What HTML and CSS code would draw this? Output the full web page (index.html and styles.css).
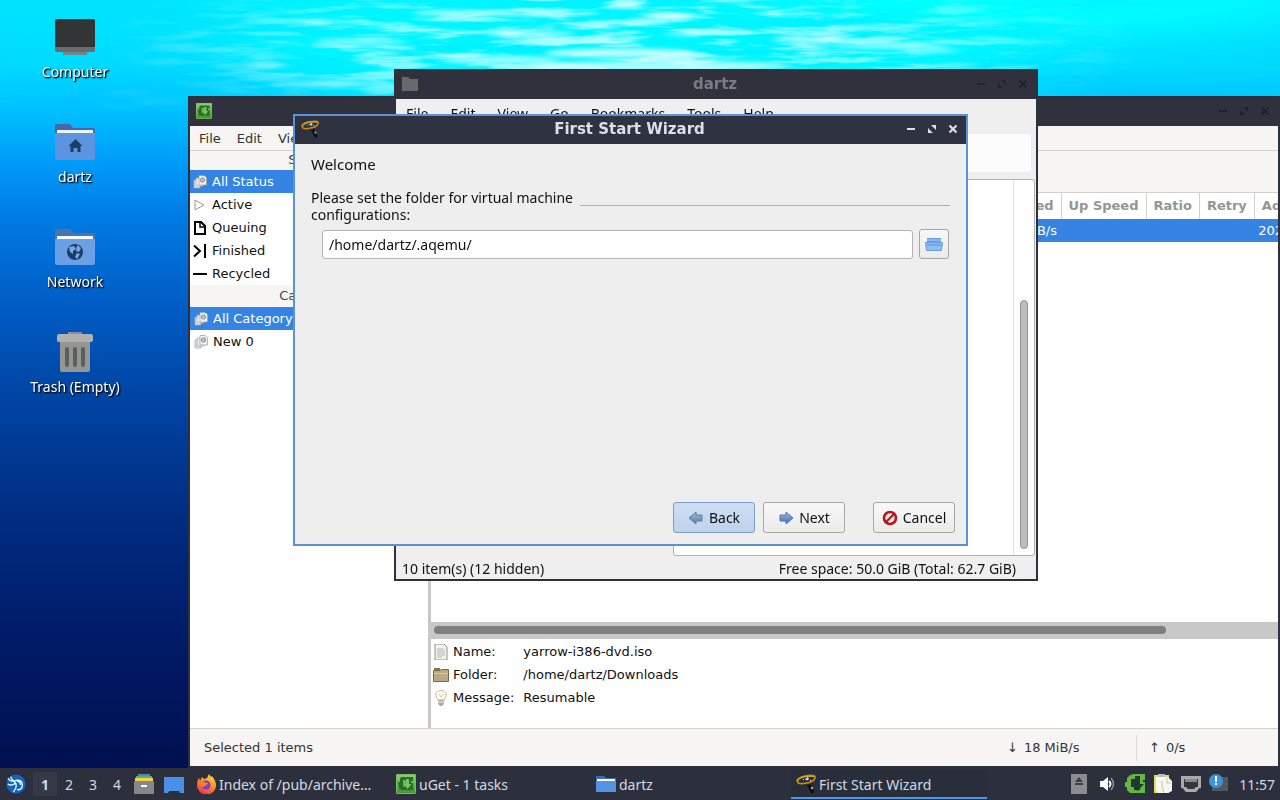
FILE: index.html
```html
<!DOCTYPE html>
<html lang="en">
<head>
<meta charset="utf-8">
<title>Desktop</title>
<link rel="stylesheet" href="styles.css">
</head>
<body>
<svg class="defs" width="0" height="0" aria-hidden="true">
  <defs>
    <linearGradient id="g-green" x1="0" y1="0" x2="0" y2="1"><stop offset="0" stop-color="#8fd07c"/><stop offset="1" stop-color="#3f8f33"/></linearGradient>
    <linearGradient id="g-blue" x1="0" y1="0" x2="0" y2="1"><stop offset="0" stop-color="#9fc0e8"/><stop offset="1" stop-color="#3f66ad"/></linearGradient>
    <linearGradient id="g-steel" x1="0" y1="0" x2="0" y2="1"><stop offset="0" stop-color="#a4c0dc"/><stop offset="1" stop-color="#55789f"/></linearGradient>
    <linearGradient id="g-fire" x1="0.8" y1="0" x2="0.3" y2="1"><stop offset="0" stop-color="#ffe04a"/><stop offset=".45" stop-color="#ff9426"/><stop offset="1" stop-color="#f0304e"/></linearGradient>
    <symbol id="min" viewBox="0 0 10 10"><path d="M1 4h8v2H1z" fill="currentColor"/></symbol>
    <symbol id="max" viewBox="0 0 10 10"><path d="M4 1h5v5zM1 4v5h5z" fill="currentColor"/></symbol>
    <symbol id="close" viewBox="0 0 10 10"><path d="M1.500 1.500l7 7M8.500 1.500l-7 7" stroke="currentColor" stroke-width="2.200"/></symbol>
    <symbol id="uget" viewBox="0 0 20 20"><rect width="20" height="20" rx="1.500" fill="url(#g-green)"/><rect x=".5" y=".5" width="19" height="19" rx="1" fill="none" stroke="#79bd67"/><path d="M2 8h2V5q0-2 2-2h3v3H7v7h2v3H6q-2 0-3-2zM8 5l2-2h7v4h-2v2h2v7h-7l-3-2 3-2 2 1h1v-2z" fill="#276f20"/><path d="M10 5h3v5h2.500L11.500 15 8 10h2z" fill="#79c367"/></symbol>
    <symbol id="wand" viewBox="0 0 20 20"><path d="M11.500 8l5.500 11" stroke="#100f0e" stroke-width="3.500"/><path d="M10 5.500l3 5" stroke="#3c3733" stroke-width="2.500"/><path d="M2.500 9C-1 6 3 3 9 2s11-1 10 2-6 5-11 5.500c-3 .3-5 0-5.500-.5" fill="none" stroke="#c98a12" stroke-width="1.700"/><path d="M2 7c0-3 8-5.500 16-4.500" fill="none" stroke="#f4d24e" stroke-width=".8"/><path d="M9 5l3-2 1 2-2 1.500z" fill="#e4dccf"/><path d="M7 6l1-1M14 6l1 1" stroke="#fff"/><circle cx="16" cy="14" r="1.200" fill="#a9a9a9"/></symbol>
    <symbol id="pages" viewBox="0 0 14 14"><path d="M1 5h6v8H1z" fill="#e4e6e8" stroke="#a2a4a7" stroke-width=".7"/><path d="M3 3h7v8H3z" fill="#ececed" stroke="#a2a4a7" stroke-width=".7"/><path d="M6 .5h5l2.500 2V10H6z" fill="#f3f3f3" stroke="#999b9e" stroke-width=".7"/><circle cx="9.500" cy="5" r="2.200" fill="#b9bcc2" stroke="#85888f" stroke-width=".8"/></symbol>
    <symbol id="folder" viewBox="0 0 20 18"><path d="M0 1h8l2 2h10v14H0z" fill="#3f6aae"/><path d="M1 4h18v3H1z" fill="#fff"/><path d="M0 6h20v11H0z" fill="#5294e2"/></symbol>
  </defs>
</svg>

<main class="desktop">
  <svg class="wallpaper" viewBox="0 0 1280 768" preserveAspectRatio="none" aria-hidden="true">
    <defs>
      <linearGradient id="sea" x1="0" y1="0" x2="0" y2="1">
        <stop offset="0" stop-color="#00e4ff"/><stop offset=".08" stop-color="#00daff"/><stop offset=".14" stop-color="#00c2ff"/><stop offset=".21" stop-color="#009cfa"/><stop offset=".28" stop-color="#007ce4"/><stop offset=".4" stop-color="#005cc4"/><stop offset=".52" stop-color="#0044a2"/><stop offset=".68" stop-color="#002c80"/><stop offset=".84" stop-color="#001a66"/><stop offset="1" stop-color="#001050"/>
      </linearGradient>
      <filter id="soft" x="-20%" y="-100%" width="140%" height="300%"><feGaussianBlur stdDeviation="5 2"/></filter>
      <filter id="glow" x="-30%" y="-60%" width="160%" height="220%"><feGaussianBlur stdDeviation="60 18"/></filter>
      <filter id="ripple" x="0" y="0" width="100%" height="100%"><feTurbulence type="fractalNoise" baseFrequency=".014 .11" numOctaves="4" seed="8"/><feColorMatrix values="0 0 0 0 .75  0 0 0 0 1  0 0 0 0 1  4 0 0 0 -1.800"/></filter>
      <filter id="shade" x="0" y="0" width="100%" height="100%"><feTurbulence type="fractalNoise" baseFrequency=".004 .05" numOctaves="3" seed="3"/><feColorMatrix values="0 0 0 0 0  0 0 0 0 .78  0 0 0 0 1  3 0 0 0 -1.400"/></filter>
      <radialGradient id="fade" gradientUnits="userSpaceOnUse" cx="0" cy="0" r="1" gradientTransform="translate(620 45) scale(520 100)"><stop offset="0" stop-color="#fff"/><stop offset=".5" stop-color="#fff" stop-opacity=".7"/><stop offset="1" stop-color="#fff" stop-opacity="0"/></radialGradient>
      <mask id="fademask"><rect width="1280" height="180" fill="url(#fade)"/></mask>
    </defs>
    <rect width="1280" height="768" fill="url(#sea)"/>
    <ellipse cx="640" cy="30" rx="420" ry="95" fill="#00f6ff" filter="url(#glow)"/>
    <ellipse cx="1060" cy="0" rx="260" ry="36" fill="#00ffff" filter="url(#glow)"/>
    <rect width="1280" height="110" filter="url(#shade)" opacity=".35"/>
    <g mask="url(#fademask)"><rect width="1280" height="180" filter="url(#ripple)" opacity=".8"/></g>
    <g filter="url(#soft)" fill="#d8ffff">
      <ellipse cx="625" cy="5" rx="18" ry="3"/><ellipse cx="667" cy="16" rx="26" ry="3"/><ellipse cx="450" cy="13" rx="36" ry="3" opacity=".7"/><ellipse cx="510" cy="14" rx="46" ry="2" opacity=".7"/>
      <ellipse cx="320" cy="23" rx="15" ry="2" opacity=".7"/><ellipse cx="855" cy="28" rx="30" ry="2" opacity=".7"/><ellipse cx="590" cy="25" rx="28" ry="2" opacity=".6"/><ellipse cx="685" cy="34" rx="20" ry="2" opacity=".6"/>
      <ellipse cx="530" cy="34" rx="44" ry="3" opacity=".7"/><ellipse cx="360" cy="42" rx="46" ry="4" opacity=".5"/><ellipse cx="620" cy="53" rx="75" ry="5" opacity=".8"/><ellipse cx="500" cy="60" rx="60" ry="4" opacity=".7"/><ellipse cx="660" cy="66" rx="130" ry="5" opacity=".8"/>
      <ellipse cx="810" cy="40" rx="38" ry="3" opacity=".7"/><ellipse cx="890" cy="46" rx="60" ry="3" opacity=".6"/><ellipse cx="930" cy="51" rx="30" ry="2" opacity=".6"/>
      <ellipse cx="170" cy="47" rx="18" ry="1" opacity=".4"/><ellipse cx="165" cy="62" rx="24" ry="2" opacity=".25"/><ellipse cx="130" cy="93" rx="24" ry="1" opacity=".2"/><ellipse cx="160" cy="102" rx="26" ry="1" opacity=".2"/><ellipse cx="250" cy="66" rx="40" ry="2" opacity=".4"/><ellipse cx="330" cy="84" rx="60" ry="3" opacity=".5"/>
    </g>
  </svg>

  <nav class="icons" aria-label="Desktop">
    <a class="shortcut" href="#computer"><svg viewBox="0 0 40 40"><path d="M8 35h24v3H8z" fill="#6d8792"/><rect y="2" width="40" height="33" rx="2" fill="#6f6a6c"/><path d="M0 4q0-2 2-2h36q2 0 2 2v26H0z" fill="#333436"/></svg>Computer</a>
    <a class="shortcut" href="#home"><svg viewBox="0 0 40 40"><path d="M0 4q0-2 2-2h13l3 4h20q2 0 2 2v8H0z" fill="#4867ab"/><path d="M2 8h36v6H2z" fill="#eef3fa"/><path d="M0 11h40v25q0 2-2 2H2q-2 0-2-2z" fill="#5d94e2"/><path d="M20.500 17l7 7h-2v6h-3v-4h-4v4h-3v-6h-2z" fill="#1c3d68"/></svg>dartz</a>
    <a class="shortcut" href="#network"><svg viewBox="0 0 40 40"><path d="M0 4q0-2 2-2h13l4 4h19q2 0 2 2v8H0z" fill="#4a74ac"/><path d="M2 9h36v4H2z" fill="#f4f7fb"/><path d="M0 12h40v24q0 2-2 2H2q-2 0-2-2z" fill="#6b9fe6"/><circle cx="20" cy="25" r="8" fill="#1c3d68"/><path d="M14 20l5-1 2 3-3 2v3l-3-2zM22 18l4 3-2 4-3-1zM22 26l3 1-3 5-2-2z" fill="#7aa8e6"/></svg>Network</a>
    <a class="shortcut" href="#trash"><svg viewBox="0 0 40 40"><path d="M13 0h14v4H13z" fill="#8d8f91"/><path d="M5 8h30v30q0 2-2 2H7q-2 0-2-2z" fill="#959594"/><rect x="2" y="2" width="36" height="8" rx="2" fill="#b0b0af"/><path d="M12 17v16M20 17v16M28 17v16" stroke="#5d5e5e" stroke-width="4" stroke-linecap="round"/></svg>Trash (Empty)</a>
  </nav>

  <section class="window uget" aria-label="uGet">
    <header class="titlebar inactive"><svg class="app" viewBox="0 0 20 20"><use href="#uget"/></svg><h2></h2>
      <div class="controls"><button aria-label="Minimize"><svg><use href="#min"/></svg></button><button aria-label="Maximize"><svg><use href="#max"/></svg></button><button aria-label="Close"><svg><use href="#close"/></svg></button></div></header>
    <nav class="menubar"><a href="#f">File</a><a href="#e">Edit</a><a href="#v">View</a></nav>
    <div class="panes">
      <aside class="side">
        <h3>Status</h3>
        <ul>
          <li class="selected"><svg viewBox="0 0 14 14"><use href="#pages"/></svg>All Status</li>
          <li><svg viewBox="0 0 14 14"><path d="M2 2l9 5-9 5z" fill="#fafafa" stroke="#999"/></svg>Active</li>
          <li><svg viewBox="0 0 14 14"><path d="M2 1h6l4 4v8H2z" fill="none" stroke="#000" stroke-width="2"/><path d="M7 1v5h5" fill="none" stroke="#000" stroke-width="1.500"/></svg>Queuing</li>
          <li><svg viewBox="0 0 14 14"><path d="M1 1.500L7 7l-6 5.500M12 0v14" fill="none" stroke="#000" stroke-width="2"/></svg>Finished</li>
          <li><svg viewBox="0 0 14 14"><path d="M0 6h14v2H0z"/></svg>Recycled</li>
        </ul>
        <h3>Category</h3>
        <ul class="categories">
          <li class="selected"><svg viewBox="0 0 14 14"><use href="#pages"/></svg>All Category</li>
          <li><svg viewBox="0 0 14 14"><use href="#pages"/></svg>New 0</li>
        </ul>
      </aside>
      <div class="main">
        <div class="toolbar"></div>
        <div class="downloads">
          <table>
            <thead><tr><th class="wide">Speed</th><th>Up Speed</th><th>Ratio</th><th>Retry</th><th>Added On</th></tr></thead>
            <tbody><tr><td class="wide">18 MiB/s</td><td></td><td></td><td></td><td class="date">2021</td></tr></tbody>
          </table>
        </div>
        <div class="hscroll"><div class="thumb"></div></div>
        <dl class="details">
          <dt><svg viewBox="0 0 16 16"><path d="M2 0h9l3 3v13H2z" fill="#f3f3f2" stroke="#8f8f8d"/><path d="M4 5h7M4 7h8M4 9h8M4 11h8M4 13h5" stroke="#b5b5b5"/></svg>Name:</dt><dd>yarrow-i386-dvd.iso</dd>
          <dt><svg viewBox="0 0 16 16"><path d="M1 1h6v3H1z" fill="#8a7350"/><path d="M.5 3.500h6l2-1h7v12H.5z" fill="#bba983" stroke="#79684a"/><path d="M1 6h14v1H1z" fill="#d7c9a9"/></svg>Folder:</dt><dd>/home/dartz/Downloads</dd>
          <dt><svg viewBox="0 0 16 16"><path d="M5 10c-6-8 1-9.500 3-9.500s9 1.500 3 9.500z" fill="#fbfaea" stroke="#bcbcb2"/><path d="M6 4l2 3 2-3" fill="none" stroke="#d8cf8c"/><path d="M5 10h6v4l-2 2H7l-2-2z" fill="#a9aba8"/><path d="M5 12h6" stroke="#eee"/></svg>Message:</dt><dd>Resumable</dd>
        </dl>
      </div>
    </div>
    <footer class="ustatus"><span class="sel">Selected 1 items</span><span class="rate"><i>↓</i>18 MiB/s</span><span class="rate up"><i>↑</i>0/s</span></footer>
  </section>

  <section class="window files" aria-label="dartz">
    <header class="titlebar inactive"><svg class="app" viewBox="0 0 16 16"><path d="M0 1h6l2 2h8v12H0z" fill="#68696c"/></svg><h2>dartz</h2>
      <div class="controls"><button aria-label="Minimize"><svg><use href="#min"/></svg></button><button aria-label="Maximize"><svg><use href="#max"/></svg></button><button aria-label="Close"><svg><use href="#close"/></svg></button></div></header>
    <nav class="menubar"><a href="#f">File</a><a href="#e">Edit</a><a href="#v">View</a><a href="#g">Go</a><a href="#b">Bookmarks</a><a href="#t">Tools</a><a href="#h">Help</a></nav>
    <div class="pathrow"><div class="pathbox"></div></div>
    <div class="listing"><div class="frame"><div class="vscroll"><div class="thumb"></div></div></div></div>
    <footer class="fstatus"><span>10 item(s) (12 hidden)</span><span>Free space: 50.0 GiB (Total: 62.7 GiB)</span></footer>
  </section>

  <section class="window wizard" aria-label="First Start Wizard">
    <header class="titlebar"><svg class="app" viewBox="0 0 20 20"><use href="#wand"/></svg><h2>First Start Wizard</h2>
      <div class="controls"><button aria-label="Minimize"><svg><use href="#min"/></svg></button><button aria-label="Maximize"><svg><use href="#max"/></svg></button><button aria-label="Close"><svg><use href="#close"/></svg></button></div></header>
    <form class="page">
      <h1>Welcome</h1>
      <div class="prompt"><label for="path">Please set the folder for virtual machine<br>configurations:</label><hr></div>
      <div class="field"><input id="path" type="text" value="/home/dartz/.aqemu/"><button type="button" class="browse" aria-label="Browse"><svg viewBox="0 0 18 14"><path d="M2 1h14v6H2z" fill="#6d9fdc"/><path d="M2 3h14" stroke="#a9cdf5"/><path d="M.5 5.500h17l-1 8h-15z" fill="#8dbdf2" stroke="#6a9ddb"/><path d="M2 8h14" stroke="#5a8fd2"/></svg></button></div>
      <div class="actions">
        <button type="button" class="focus"><svg viewBox="0 0 16 16"><path d="M1 8l7-6v3h6v6H8v3z" fill="url(#g-steel)" stroke="#61809f"/></svg>Back</button>
        <button type="button"><svg viewBox="0 0 16 16"><path d="M15 8L8 2v3H2v6h6v3z" fill="url(#g-blue)" stroke="#5b74a3"/></svg>Next</button>
        <button type="button" class="cancel"><svg viewBox="0 0 16 16"><circle cx="8" cy="8" r="6" fill="#f5eaea" stroke="#b3161f" stroke-width="2.600"/><path d="M4 12l8-8" stroke="#b3161f" stroke-width="2.200"/></svg>Cancel</button>
      </div>
    </form>
  </section>
</main>

<footer class="taskbar">
  <button class="start" aria-label="Menu"><svg viewBox="0 0 22 22"><circle cx="11" cy="11" r="10.500" fill="#0f66c0"/><path d="M2 5c4 5 7 3 9 2 4-1 7 1 7 5s-3 6-6 5M5 3c2 5 5 5 6 8s0 5-3 9M2 11c4 3 7 0 9-1M12 8c3 0 4 2 4 4" fill="none" stroke="#e8f3ff" stroke-width="1.500"/></svg></button>
  <div class="pager"><button class="current">1</button><button>2</button><button>3</button><button>4</button></div>
  <button class="launch" aria-label="Files"><svg viewBox="0 0 20 20"><path d="M4 0h12v3H4z" fill="#4a86d8"/><path d="M2 2h16v3H2z" fill="#6ab04c"/><path d="M1 4h18v3H1z" fill="#f0cf58"/><rect y="7" width="20" height="13" rx="1" fill="#858688"/><path d="M7 11h6v2H7z" fill="#fff"/></svg></button>
  <button class="launch" aria-label="Show desktop"><svg viewBox="0 0 20 20"><path d="M0 3h20v16h-4l-1-2H5l-1 2H0z" fill="#4a90e8"/></svg></button>
  <div class="tasks">
    <button><svg viewBox="0 0 20 20"><path d="M6 3l2 2 3-1 2-4 2 3 1-1c3 4 4 7 4 9a9.500 9 0 0 1-19 1c0-4 1-7 2-8l1 3z" fill="url(#g-fire)"/><circle cx="10" cy="11" r="4.500" fill="#7542c4"/><path d="M4 9c4-2 5 0 8 0-1 3-4 2-4 4-3 0-4-2-4-4z" fill="#ff8128"/></svg><span>Index of /pub/archive…</span></button>
    <button><svg viewBox="0 0 20 20"><use href="#uget"/></svg><span>uGet - 1 tasks</span></button>
    <button><svg viewBox="0 0 20 18"><use href="#folder"/></svg><span>dartz</span></button>
    <button class="current"><svg viewBox="0 0 20 20"><use href="#wand"/></svg><span>First Start Wizard</span></button>
  </div>
  <div class="tray">
    <svg viewBox="0 0 20 20"><path d="M2 0h16v20H2z" fill="#8b8c90"/><path d="M6 8l4-5 4 5zM6 9h8v2H6z" fill="#3f4147"/></svg>
    <svg viewBox="0 0 20 20"><path d="M3 7h3l5-4v14l-5-4H3z" fill="#fff"/><path d="M12 7q3 3 0 6" fill="none" stroke="#fff" stroke-width="2"/><path d="M14 4q5 6 0 12" fill="none" stroke="#8d9098" stroke-width="1.500"/></svg>
    <svg viewBox="0 0 20 20"><path d="M0 8h2V4l3-3h3v4H6v8h3v6H5l-3-3v-3H0zM7 0h13v6h-2v2h2v11H8l-2-3h9v-5h-3V5H7z" fill="#62b742"/><path d="M10 2h5v8h4l-6.500 7L6 10h4z" fill="#1b3d2c"/></svg>
    <svg viewBox="0 0 20 20"><path d="M1 1h15v18H1z" fill="#e8dc60"/><path d="M5 0h7v3H5z" fill="#bdbdbd"/><path d="M3 3h12l4 4v10l-4 2H5l-2-3z" fill="#f7f7f0"/><path d="M9 7v5l2 7M14 4v5h4" fill="none" stroke="#c4c4bb"/></svg>
    <svg viewBox="0 0 20 20"><path d="M0 2h20v12q-3 0-3 2l-2 2H5l-2-2q0-2-3-2z" fill="#aaaaac"/><path d="M3 5h14v8h-2l-2 2H7l-2-2H3z" fill="#33363b"/><path d="M5 5v3M7 5v3M9 5v3M11 5v3M13 5v3M15 5v3" stroke="#ddd"/></svg>
    <svg viewBox="0 0 20 20"><path d="M9 3h10v14H3v-4h6z" fill="#525860"/><circle cx="7" cy="7" r="7" fill="#3c93dc"/><path d="M6 2h2v6H6zM6 9h2v2H6z" fill="#fff"/></svg>
  </div>
  <time>11:57</time>
</footer>
</body>
</html>
```
FILE: styles.css
```css
* { box-sizing: border-box; }
body {
  margin: 0;
  height: 100vh;
  display: flex;
  flex-direction: column;
  overflow: hidden;
  background: #001050;
  font: 14px/17px "Noto Sans", "Open Sans", sans-serif;
  color: #111;
}
button, input { font: inherit; color: inherit; }
button { border: 0; padding: 0; background: none; }
a { color: inherit; text-decoration: none; }
h1, h2, h3, ul, dl, dd { margin: 0; padding: 0; font: inherit; list-style: none; }
svg { flex: none; display: block; }
.defs { position: absolute; }

.desktop { flex: 1; position: relative; overflow: hidden; min-height: 0; }
.wallpaper { position: absolute; width: 100%; height: 100%; }

.icons { position: relative; width: 150px; display: flex; flex-direction: column; padding-top: 17px; }
.shortcut {
  height: 105px;
  display: flex;
  flex-direction: column;
  align-items: center;
  gap: 6px;
  color: #fff;
  text-shadow: 1px 1px 1px #012, 1px 1px 2px #012;
}
.shortcut svg { width: 40px; height: 40px; }

/* Windows */
.window { position: absolute; display: flex; flex-direction: column; border: 2px solid #2f303d; overflow: hidden; }
.titlebar {
  flex: none;
  height: 28px;
  padding: 0 8px 2px 6px;
  display: grid;
  grid-template-columns: 1fr auto 1fr;
  align-items: center;
  background: #2f3240;
  color: #dcdfe8;
}
.titlebar h2 { font: bold 15px/16px "DejaVu Sans", sans-serif; }
.titlebar.inactive { background: #30313d; color: #797b82; }
.titlebar .app { width: 16px; height: 16px; }
.controls { justify-self: end; display: flex; gap: 11px; }
.controls svg { width: 10px; height: 10px; }
.inactive .controls { color: #21222c; }

.uget { left: 188px; right: 0; top: 96px; bottom: 0; background: #fff; font: 13px/17px "DejaVu Sans", sans-serif; }
.uget .menubar { height: 25px; display: flex; align-items: center; gap: 16px; padding-left: 9px; background: #f6f5f3; color: #333; border-bottom: 1px solid #d5d2ce; }
.panes { flex: 1; display: flex; min-height: 0; }
.side { flex: none; width: 241px; border-right: 3px solid #c8c8c8; }
.side h3 { height: 19px; line-height: 17px; text-align: center; background: #f6f5f3; color: #444; }
.side ul + h3 { height: 22px; line-height: 22px; }
.side li { height: 23px; display: flex; align-items: center; gap: 5px; padding-left: 3px; }
.side .categories li { padding-left: 4px; }
.side li svg { width: 14px; height: 14px; }
.side .selected, .downloads td { background: #3584e4; color: #fff; }
.main { flex: 1; min-width: 0; display: flex; flex-direction: column; }
.toolbar { height: 42px; background: #f6f5f3; border-bottom: 1px solid #d5d2ce; }
.downloads { flex: 1; overflow: hidden; }
.downloads table { border-collapse: collapse; }
.downloads th { height: 26px; padding: 0 7px 2px; border-right: 1px solid #d5d2ce; color: #959595; text-align: left; white-space: nowrap; }
.downloads td { height: 23px; padding: 0 4px; }
.downloads .wide { width: 630px; min-width: 630px; text-align: right; }
.downloads .date { min-width: 110px; }
.hscroll { height: 17px; background: #c8c8c8; padding: 4px 3px; }
.hscroll .thumb { width: 87%; height: 8px; border-radius: 4px; background: #808080; }
.details { height: 89px; display: grid; grid-template-columns: auto 1fr; grid-auto-rows: 23px; column-gap: 9px; padding: 1px 0 0 2px; }
.details dt { display: flex; align-items: center; gap: 4px; }
.details dd { line-height: 23px; }
.details svg { width: 16px; height: 16px; }
.ustatus { height: 38px; display: flex; align-items: center; background: #f6f5f3; border-top: 1px solid #d5d2ce; color: #333; }
.ustatus .sel { flex: 1; padding-left: 14px; }
.rate { width: 142px; padding-left: 13px; line-height: 26px; display: flex; gap: 6px; }
.rate i { font-style: normal; }
.rate.up { padding-left: 12px; border-left: 1px solid #dedcd9; }

.files { left: 394px; top: 69px; width: 644px; height: 512px; background: #efefef; }
.files .menubar { display: flex; gap: 22px; padding: 6px 10px 0; height: 35px; }
.pathrow { display: flex; justify-content: flex-end; padding-right: 5px; }
.pathbox { width: 400px; height: 38px; border-radius: 4px; background: #fcfcfc; }
.listing { flex: 1; padding: 7px 1px 0 277px; display: flex; }
.frame { flex: 1; display: flex; justify-content: flex-end; border: 1px solid #b0b0b0; border-radius: 3px; background: #fff; }
.vscroll { width: 21px; border-left: 1px solid #e2e2e2; padding: 120px 6px 6px; display: flex; }
.vscroll .thumb { flex: 1; border: 1px solid #949494; border-radius: 4px; background: #bdbdbd; }
.fstatus { height: 23px; padding: 2px 20px 0 6px; display: flex; align-items: center; justify-content: space-between; }

.wizard { left: 293px; top: 114px; width: 675px; height: 432px; background: #eee; border-color: #5a92d4; }
.wizard .titlebar .app { width: 18px; height: 18px; }
.page { flex: 1; display: flex; flex-direction: column; padding: 11px 11px 11px 16px; }
.page h1 { font-size: 15px; line-height: 18px; }
.prompt { display: flex; align-items: center; gap: 7px; margin: 16px 5px 0 0; }
.prompt hr { flex: 1; margin: 0 0 2px; border: 0; border-top: 1px solid #b0b0b0; }
.field { display: flex; align-items: center; gap: 6px; margin: 6px 6px 0 11px; }
.field input { flex: 1; height: 29px; padding: 0 6px; border: 1px solid #b4b4b4; border-radius: 3px; background: #fff; }
.browse, .actions button {
  display: flex;
  align-items: center;
  justify-content: center;
  border: 1px solid #a6a6a6;
  border-radius: 3px;
  background: linear-gradient(#f8f8f8, #ebebeb);
}
.browse { width: 30px; height: 30px; }
.browse svg { width: 18px; height: 14px; }
.actions { margin-top: auto; display: flex; justify-content: flex-end; gap: 8px; }
.actions button { width: 82px; height: 31px; gap: 5px; }
.actions svg { width: 16px; height: 16px; }
.actions .focus { border-color: #7c9dc6; background: linear-gradient(#cfdff2, #bdd2ed); }
.actions .cancel { margin-left: 20px; }

/* Panel */
.taskbar { flex: none; height: 32px; display: flex; align-items: center; padding: 0 5px 0 4px; background: #2c303d; color: #d3dae3; }
.taskbar svg { width: 20px; height: 20px; }
.start { margin-left: 2px; }
.pager { display: flex; margin: 0 0 0 7px; }
.pager button { width: 24px; height: 24px; }
.pager .current { background: #363946; font-weight: bold; }
.launch { width: 30px; display: flex; justify-content: center; }
.tasks { flex: 1; display: flex; gap: 4px; margin-left: 2px; min-width: 0; }
.tasks button { width: 196px; height: 30px; padding: 2px 5px 0; display: flex; align-items: center; gap: 3px; border-bottom: 2px solid transparent; white-space: nowrap; }
.tasks .current { border-bottom-color: #5294e2; background: #292e3b; }
.tray { display: flex; gap: 8px; margin-right: 10px; }
```
